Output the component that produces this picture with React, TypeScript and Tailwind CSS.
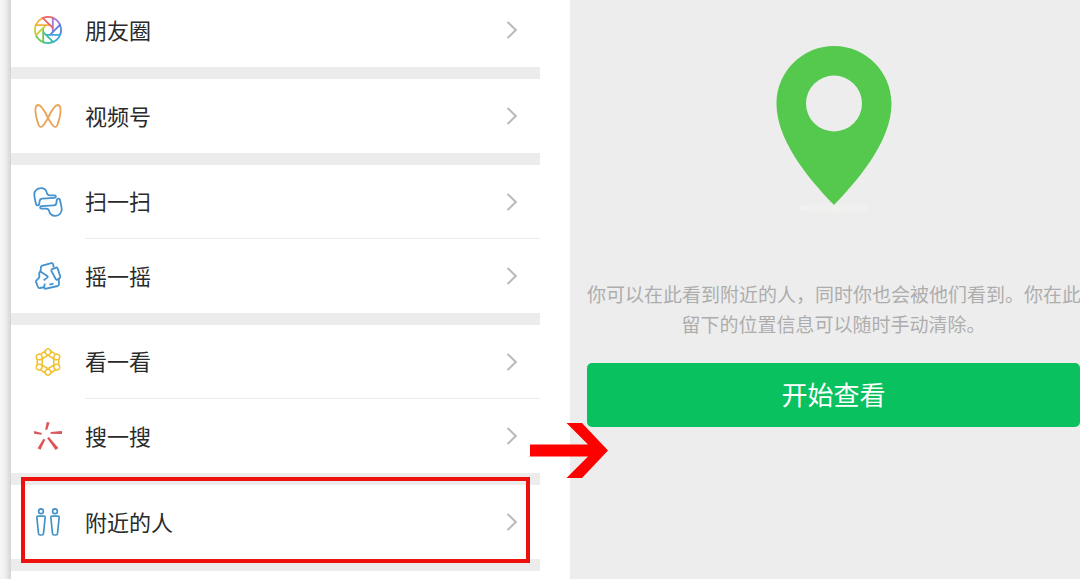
import type { ReactNode } from "react";
import { clsx } from "clsx";

const BLADES = ["#a477d3", "#5a83dc", "#3fa9dd", "#39bfa0", "#6cc75a", "#c9cf3c", "#f3b13d", "#ea6468"];
const SIXTHS = [0, 60, 120, 180, 240, 300];

function MomentsIcon() {
  return (
    <svg viewBox="0 0 28 28" className="size-7" fill="none" strokeWidth="1.8" strokeLinecap="round">
      {BLADES.map((color, i) => (
        <path
          key={color}
          d="M18.8 15.6V1.9A13 13 0 0 1 26 8.9"
          stroke={color}
          transform={`rotate(${i * 45} 14 14)`}
        />
      ))}
    </svg>
  );
}

function ChannelsIcon() {
  return (
    <svg viewBox="0 0 28 28" className="size-7" fill="none" stroke="#e8a457" strokeWidth="1.8">
      <path d="M14 16C11 9.500 7.500 3 4 3C-.5 3.500 1.7 15.500 4.6 23C6.6 28 10.500 22.500 14 16C17 9.500 20.500 3 24 3C28.500 3.500 26.300 15.500 23.400 23C21.400 28 17.500 22.500 14 16Z" />
    </svg>
  );
}

function ScanIcon() {
  const hand =
    "M2.2 16.6C1.2 12.5.3 9 .3 6.4C.3 2.8 3.2.2 7 .2C10.4.2 12.2 2.3 12.9 5C13.4 6.7 14.2 7.4 15.6 7.4H20.6C22.3 7.4 22.3 9.8 20.6 9.9L8.2 10.7C6.3 10.8 5.8 11.5 5.6 13.2L5.2 16C5 17.6 2.7 17.9 2.2 16.6Z";
  return (
    <svg viewBox="0 0 28 28" className="size-7 overflow-visible" fill="none" stroke="#4492d0" strokeWidth="1.8">
      <path d={hand} />
      <path d={hand} transform="rotate(180 14 14)" />
    </svg>
  );
}

function ShakeIcon() {
  return (
    <svg viewBox="0 0 28 28" className="size-7" fill="none" stroke="#4492d0" strokeWidth="1.8" strokeLinejoin="round">
      <path d="M6.4 10L7 5Q7.2 4 8.2 3.7L17.4 1.1Q18.8.8 19.1 2.2L19.7 5.2" />
      <path d="M18 7.2L22.2 5.6Q23.3 5.3 23.6 6.4L26.2 14.2Q26.5 15.5 25.5 16.2L23.4 17.6Q22.2 18.200 21.700 17L17.4 8.800Q16.900 7.700 18 7.200Z" />
      <path d="M24.800 17L25 22.300Q25 23.600 23.800 24L12 26.700Q10 27 10.200 25.200L10.700 21.500" />
      <path d="M6.400 9.600L13.200 13.900Q14.200 14.700 13.300 15.600L9.600 18.400M6.400 9.600Q4.800 10.200 5.300 13.500L5.300 15.300L2 19Q1.500 19.900 2.300 20.700L4 25Q4.600 26.400 6 26L10.200 25.200M15.500 22.600L19.500 21.700" />
    </svg>
  );
}

function TopStoriesIcon() {
  return (
    <svg viewBox="0 0 28 28" className="size-7" fill="none" stroke="#f1c232" strokeWidth="1.6" strokeLinejoin="round">
      {SIXTHS.map((deg) => (
        <path
          key={deg}
          d="M8.2 4.600Q10.600 4.600 11.400 2.400Q14 -.8 16.600 2.400Q17.400 4.600 19.800 4.600M11.400 2.400Q10.200 5.200 14 7.400Q17.800 5.200 16.600 2.400M14 7.400L11.100 9M14 7.400L16.900 9"
          transform={`rotate(${deg} 14 14)`}
        />
      ))}
    </svg>
  );
}

function SearchIcon() {
  return (
    <svg viewBox="0 0 28 28" className="size-7" fill="#dc5558">
      <path d="M12.800 0L15.600.6L13.200 8L11.100 7.500Z" />
      <path d="M28 8.900V12.100L16.600 11.700V10Z" />
      <path d="M0 9L.2 11.800L7.500 12.700L7.700 10.900Z" />
      <path d="M3.600 26.300L6.500 27.700L11.300 17.700L9.400 16.800Z" />
      <path d="M21.600 28L24.400 26.100L14.900 15L13.100 16.200Z" />
    </svg>
  );
}

function NearbyIcon() {
  return (
    <svg viewBox="0 0 28 28" className="size-7" fill="none" stroke="#4492c8" strokeWidth="1.7" strokeLinejoin="round">
      {[0, 14].map((x) => (
        <g key={x} transform={`translate(${x} 0)`}>
          <circle cx="7" cy="3.200" r="2.400" />
          <path d="M4.200 8.200H9.800Q11.300 8.200 11.100 9.800L9.500 25.400Q9.300 27 7.900 27H6.100Q4.700 27 4.500 25.400L2.900 9.800Q2.700 8.200 4.200 8.200Z" />
        </g>
      ))}
    </svg>
  );
}

function Chevron() {
  return (
    <svg viewBox="0 0 12 18" className="h-[18px] w-3" fill="none" stroke="#b9b9b9" strokeWidth="2">
      <path d="M1.5 1L9.8 9L1.5 17" />
    </svg>
  );
}

function Row({ icon, label, divided }: { icon: ReactNode; label: string; divided?: boolean }) {
  return (
    <a href="#" className="flex h-[74px] items-center bg-white pl-[23px]">
      {icon}
      <span
        className={clsx(
          "ml-[23px] flex h-full flex-1 items-center justify-between pr-[22px]",
          divided && "border-b border-[#ececec]"
        )}
      >
        <span className="pb-[3px] text-[22px] leading-8 text-[#2a2a2a]">{label}</span>
        <Chevron />
      </span>
    </a>
  );
}

function DiscoverList() {
  return (
    <nav className="-mt-[7px] flex w-1/2 bg-[#ececec]">
      {/* Soft edge of the phone screen */}
      <div className="w-[11px] shrink-0 bg-linear-to-r from-[#f6f6f6] via-[#eeeeee] to-[#d4d4d4]" />
      <div className="flex flex-1 flex-col gap-3">
        <Row icon={<MomentsIcon />} label="朋友圈" />
        <Row icon={<ChannelsIcon />} label="视频号" />
        <div>
          <Row icon={<ScanIcon />} label="扫一扫" divided />
          <Row icon={<ShakeIcon />} label="摇一摇" />
        </div>
        <div>
          <Row icon={<TopStoriesIcon />} label="看一看" divided />
          <Row icon={<SearchIcon />} label="搜一搜" />
        </div>
        <div className="relative">
          <Row icon={<NearbyIcon />} label="附近的人" />
          {/* Highlight frame and the arrow to the next step */}
          <div className="pointer-events-none absolute -top-2 right-2.5 -bottom-1 left-2.5 border-4 border-[#ee0f0f]" />
          <svg
            viewBox="0 0 78 55"
            className="pointer-events-none absolute bottom-[81px] left-full z-10 -ml-2.5 h-[55px] w-[78px]"
            fill="#ff0000"
          >
            <path d="M0 21.500H58L36.500 0H52L78 27.500L52 55H36.500L58 33.500H0Z" />
          </svg>
        </div>
        <div className="flex-1 bg-white" />
      </div>
    </nav>
  );
}

function NearbyIntro() {
  return (
    <main className="ml-[30px] min-w-0 flex-1 bg-[#ededed] pt-[46px] pl-[17px]">
      <svg viewBox="0 0 116 168" className="mx-auto h-[168px] w-[116px]">
        <ellipse cx="58" cy="162" rx="36" ry="5" fill="#f0f0ef" />
        <path
          fillRule="evenodd"
          fill="#55c94d"
          d="M58 0C90 0 115.500 26 115.500 57.500C115.500 92 88 128 58 159C28 128 .5 92 .5 57.500C.5 26 26 0 58 0ZM58 29.500A28 28 0 1 0 58 85.500A28 28 0 1 0 58 29.500Z"
        />
      </svg>
      <p className="mt-[65px] text-center text-[19px] leading-[30px] whitespace-nowrap text-[#adadad]">
        你可以在此看到附近的人，同时你也会被他们看到。你在此
        <br />
        留下的位置信息可以随时手动清除。
      </p>
      <button type="button" className="mt-6 h-16 w-full rounded-[5px] bg-[#0ac160] pb-1 text-[26px] text-white">
        开始查看
      </button>
    </main>
  );
}

export default function App() {
  return (
    <div className="flex min-h-screen overflow-hidden bg-white font-['Noto_Sans_CJK_SC',sans-serif]">
      <DiscoverList />
      <NearbyIntro />
    </div>
  );
}
